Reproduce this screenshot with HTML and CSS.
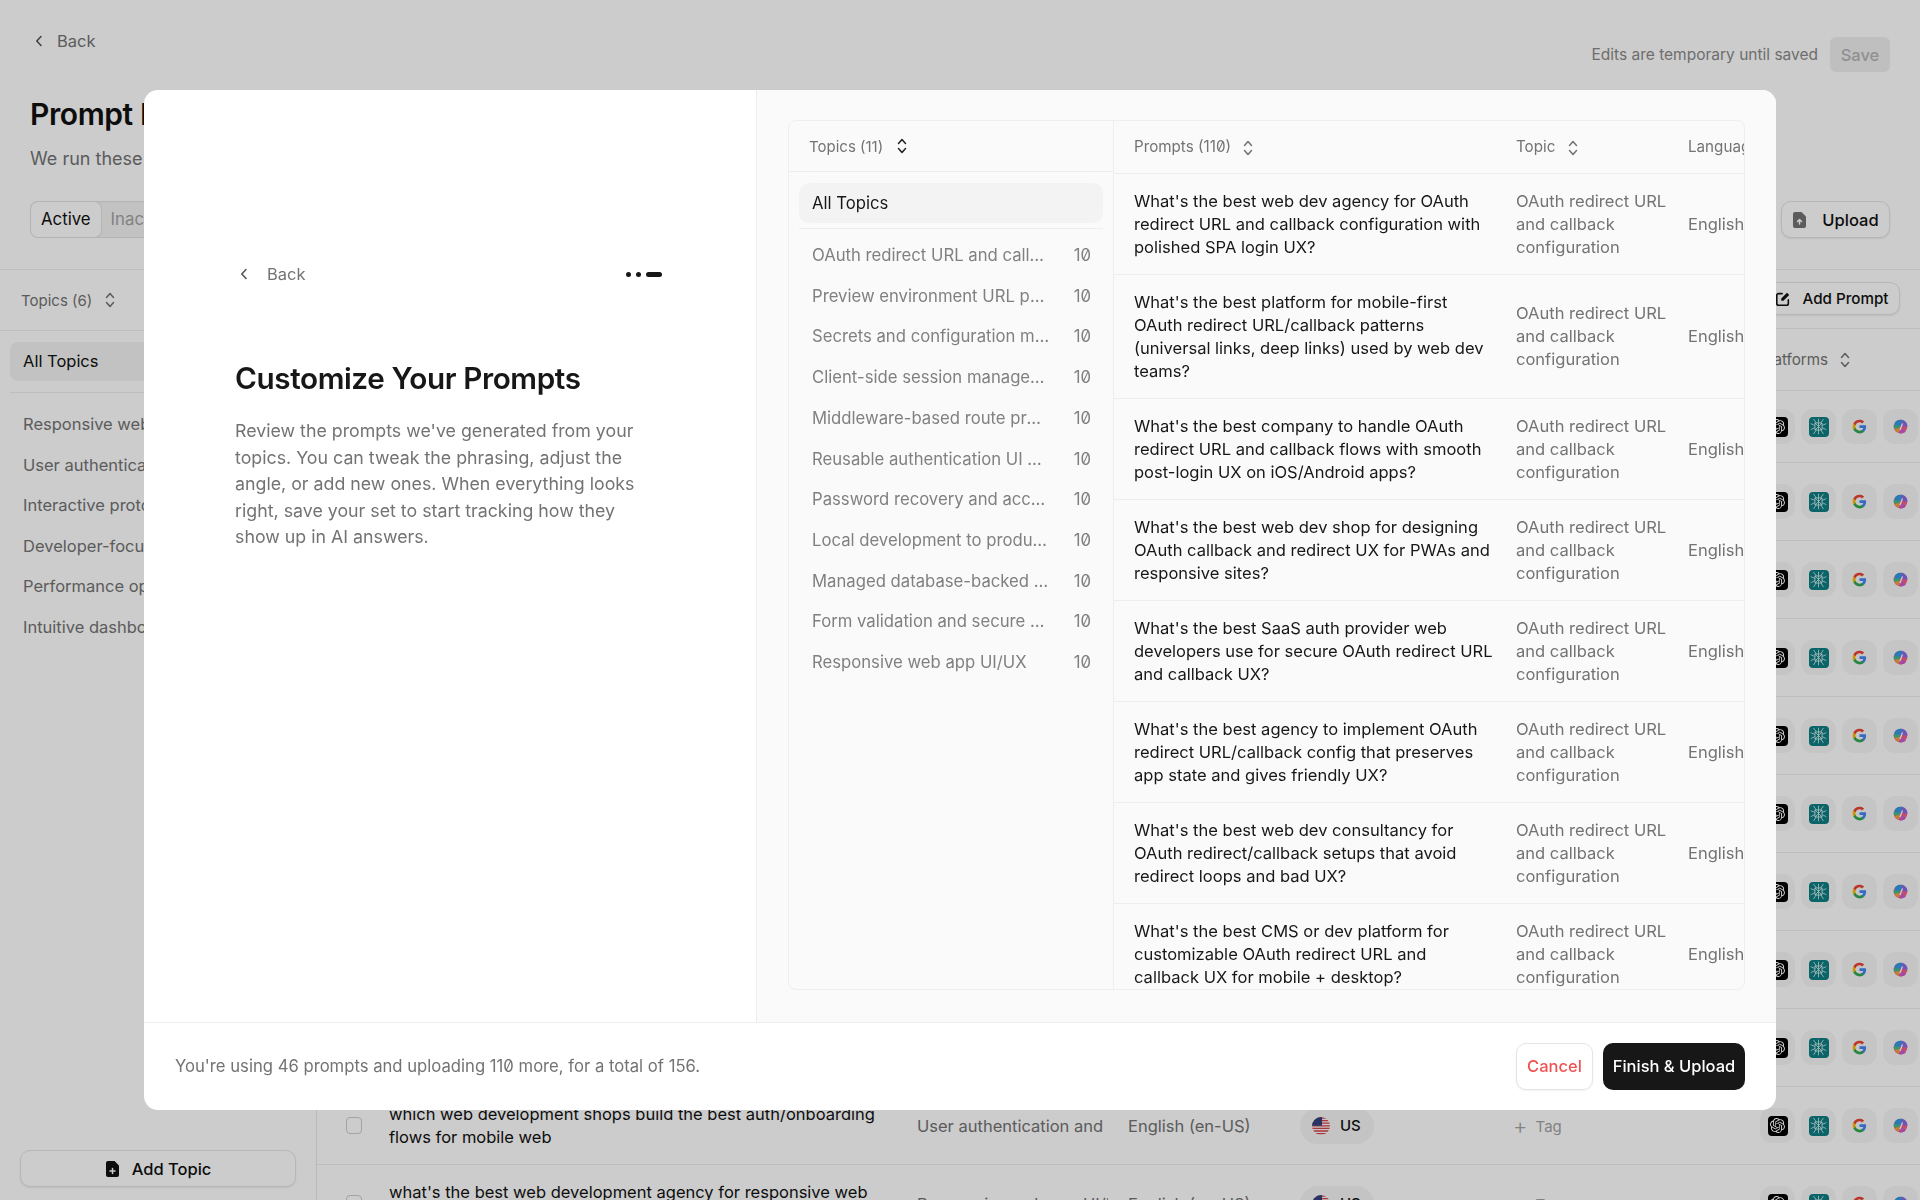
FILE: index.html
```html
<!DOCTYPE html>
<html lang="en">
<head>
    <meta charset="UTF-8">
    <meta name="viewport" content="width=device-width, initial-scale=1.0">
    <title>Prompt Library</title>
    <link rel="stylesheet" href="styles.css">
</head>
<body>
    <svg class="sprite" aria-hidden="true">
        <symbol id="sort" viewBox="0 0 10 18">
            <path d="M1.5 6.5 5 2.5l3.5 4M1.5 11.5 5 15.5l3.5-4" fill="none" stroke="currentColor" stroke-width="1.5" stroke-linecap="round" stroke-linejoin="round"/>
        </symbol>
        <symbol id="chevron" viewBox="0 0 10 14">
            <path d="M7 2.5 2.8 7 7 11.5" fill="none" stroke="currentColor" stroke-width="1.6" stroke-linecap="round" stroke-linejoin="round"/>
        </symbol>
        <symbol id="openai" viewBox="0 0 24 24">
            <path fill="#fff" d="M22.2819 9.8211a5.9847 5.9847 0 0 0-.5157-4.9108 6.0462 6.0462 0 0 0-6.5098-2.9A6.0651 6.0651 0 0 0 4.9807 4.1818a5.9847 5.9847 0 0 0-3.9977 2.9 6.0462 6.0462 0 0 0 .7427 7.0966 5.98 5.98 0 0 0 .511 4.9107 6.051 6.051 0 0 0 6.5146 2.9001A5.9847 5.9847 0 0 0 13.2599 24a6.0557 6.0557 0 0 0 5.7718-4.2058 5.9894 5.9894 0 0 0 3.9977-2.9001 6.0557 6.0557 0 0 0-.7475-7.0729zm-9.022 12.6081a4.4755 4.4755 0 0 1-2.8764-1.0408l.1419-.0804 4.7783-2.7582a.7948.7948 0 0 0 .3927-.6813v-6.7369l2.02 1.1686a.071.071 0 0 1 .038.052v5.5826a4.504 4.504 0 0 1-4.4945 4.4944zm-9.6607-4.1254a4.4708 4.4708 0 0 1-.5346-3.0137l.142.0852 4.783 2.7582a.7712.7712 0 0 0 .7806 0l5.8428-3.3685v2.3324a.0804.0804 0 0 1-.0332.0615L9.74 19.9502a4.4992 4.4992 0 0 1-6.1408-1.6464zM2.3408 7.8956a4.485 4.485 0 0 1 2.3655-1.9728V11.6a.7664.7664 0 0 0 .3879.6765l5.8144 3.3543-2.0201 1.1685a.0757.0757 0 0 1-.071 0l-4.8303-2.7865A4.504 4.504 0 0 1 2.3408 7.872zm16.5963 3.8558L13.1038 8.364 15.1192 7.2a.0757.0757 0 0 1 .071 0l4.8303 2.7913a4.4944 4.4944 0 0 1-.6765 8.1042v-5.6772a.79.79 0 0 0-.407-.667zm2.0107-3.0231l-.142-.0852-4.7735-2.7818a.7759.7759 0 0 0-.7854 0L9.409 9.2297V6.8974a.0662.0662 0 0 1 .0284-.0615l4.8303-2.7866a4.4992 4.4992 0 0 1 6.6802 4.66zM8.3065 12.863l-2.02-1.1638a.0804.0804 0 0 1-.038-.0567V6.0742a4.4992 4.4992 0 0 1 7.3757-3.4537l-.142.0805L8.704 5.459a.7948.7948 0 0 0-.3927.6813zm1.0976-2.3654l2.602-1.4998 2.6069 1.4998v2.9994l-2.5974 1.4997-2.6067-1.4997Z"/>
        </symbol>
        <symbol id="perplexity" viewBox="0 0 24 24">
            <path d="M12 1v22M5 1.500l4 5.500M19 1.500l-4 5.500M1 8l6 2.500M23 8l-6 2.500M1 16.500l6-3M23 16.500l-6-3M5 22.500l4-6M19 22.500l-4-6M7 7h10v10H7zM7 7l10 10M17 7 7 17" fill="none" stroke="#dff3f3" stroke-width="1.100" stroke-linejoin="round"/>
        </symbol>
        <symbol id="google" viewBox="0 0 24 24">
            <path fill="#4285f4" d="M22.56 12.25c0-.78-.07-1.53-.2-2.25H12v4.26h5.92c-.26 1.37-1.04 2.53-2.21 3.31v2.77h3.57c2.08-1.92 3.28-4.74 3.28-8.09z"/>
            <path fill="#34a853" d="M12 23c2.97 0 5.46-.98 7.28-2.66l-3.57-2.77c-.98.66-2.23 1.06-3.71 1.06-2.86 0-5.29-1.93-6.16-4.53H2.18v2.84C3.99 20.53 7.7 23 12 23z"/>
            <path fill="#fbbc05" d="M5.84 14.09c-.22-.66-.35-1.36-.35-2.09s.13-1.43.35-2.09V7.07H2.18C1.43 8.55 1 10.22 1 12s.43 3.45 1.18 4.93l2.85-2.22.81-.62z"/>
            <path fill="#ea4335" d="M12 5.38c1.62 0 3.06.56 4.21 1.64l3.15-3.15C17.45 2.09 14.97 1 12 1 7.7 1 3.99 3.47 2.18 7.07l3.66 2.84c.87-2.6 3.3-4.53 6.16-4.53z"/>
        </symbol>
        <symbol id="copilot" viewBox="0 0 24 24">
            <circle cx="12" cy="12" r="11" fill="#f0608c"/>
            <path fill="#2f9be6" d="M12 1A11 11 0 0 0 3 6L2.500 11H12l3-10z"/>
            <path fill="#8a6ce8" d="M15 1.500 12 11l11 1c.5-5-3.500-10-8-10.500z"/>
            <path fill="#3fbf88" d="M1 10.500c0 2 .5 4 1.500 5.500l7.500-1 1-4.500z"/>
            <path fill="#f7a13a" d="M2.500 15.500c1 3 4 6 7 7l2-8z"/>
            <path fill="#d05ccc" d="M9.500 22.500c3 1.200 9 .5 11-3l-9-5.500z"/>
            <path fill="#fff" d="M14 7h2.200l-4 11H10z"/>
        </symbol>
        <symbol id="flag-us" viewBox="0 0 18 18">
            <rect width="18" height="18" fill="#f6f6f6"/>
            <path d="M0 1h18M0 3.600h18M0 6.200h18M0 8.800h18M0 11.400h18M0 14h18M0 16.600h18" stroke="#d8434b" stroke-width="1.300"/>
            <rect width="10" height="8.800" fill="#34427f"/>
        </symbol>
    </svg>

    <div class="page">
        <header class="page-head">
            <div class="head-top">
                <a class="back-link" href="#"><svg class="icon-chevron"><use href="#chevron"/></svg>Back</a>
                <div class="save-group">
                    <span>Edits are temporary until saved</span>
                    <button class="save-btn">Save</button>
                </div>
            </div>
            <h1>Prompt Library</h1>
            <p class="page-sub">We run these prompts daily across the AI platforms you track.</p>
            <div class="head-controls">
                <div class="tabs">
                    <span class="tab active">Active</span>
                    <span class="tab">Inactive</span>
                </div>
                <button class="btn upload-btn">
                    <svg class="icon-md" viewBox="0 0 16 18"><path d="M3 1h6.500L14 5.500V15a2 2 0 0 1-2 2H3a2 2 0 0 1-2-2V3a2 2 0 0 1 2-2z" fill="#737373"/><path d="M7.500 13V9M5.500 10.500l2-2 2 2" fill="none" stroke="#fff" stroke-width="1.500" stroke-linecap="round" stroke-linejoin="round"/></svg>
                    Upload
                </button>
            </div>
        </header>

        <div class="page-body">
            <aside class="sidebar">
                <div class="sidebar-head">Topics (6) <svg class="icon-sort"><use href="#sort"/></svg></div>
                <div class="side-all">All Topics</div>
                <ul class="side-list">
                    <li>Responsive web app UI/UX</li>
                    <li>User authentication and</li>
                    <li>Interactive prototypes</li>
                    <li>Developer-focused</li>
                    <li>Performance optimization</li>
                    <li>Intuitive dashboards</li>
                </ul>
                <button class="btn add-topic">
                    <svg class="icon-md" viewBox="0 0 16 18"><path d="M3 1h6.500L14 5.500V15a2 2 0 0 1-2 2H3a2 2 0 0 1-2-2V3a2 2 0 0 1 2-2z" fill="#111"/><path d="M7.500 8.500v5M5 11h5" stroke="#fff" stroke-width="1.500" stroke-linecap="round"/></svg>
                    Add Topic
                </button>
            </aside>

            <main class="main">
                <div class="toolbar">
                    <button class="btn add-prompt">
                        <svg class="icon-md" viewBox="0 0 18 18"><path d="M8 3H4a2 2 0 0 0-2 2v9a2 2 0 0 0 2 2h9a2 2 0 0 0 2-2v-4" fill="none" stroke="#111" stroke-width="1.800" stroke-linecap="round"/><path d="M7 8.500 13.500 2 16 4.500 9.500 11H7z" fill="#111"/></svg>
                        Add Prompt
                    </button>
                </div>
                <div class="prompt-row head-row">
                    <span></span>
                    <span>Prompt</span>
                    <span>Topic</span>
                    <span>Language</span>
                    <span>Location</span>
                    <span>Tags</span>
                    <span class="head-platforms">Platforms <svg class="icon-sort"><use href="#sort"/></svg></span>
                </div>

                <div class="prompt-row first">
                    <span class="check"></span><span class="p-text"></span><span></span><span></span><span></span><span></span>
                    <div class="platforms"><span class="pf"><span class="tile black"><svg><use href="#openai"/></svg></span></span><span class="pf"><span class="tile teal"><svg><use href="#perplexity"/></svg></span></span><span class="pf"><svg class="bare"><use href="#google"/></svg></span><span class="pf"><svg class="bare"><use href="#copilot"/></svg></span></div>
                </div>
                <div class="prompt-row">
                    <span class="check"></span><span class="p-text"></span><span></span><span></span><span></span><span></span>
                    <div class="platforms"><span class="pf"><span class="tile black"><svg><use href="#openai"/></svg></span></span><span class="pf"><span class="tile teal"><svg><use href="#perplexity"/></svg></span></span><span class="pf"><svg class="bare"><use href="#google"/></svg></span><span class="pf"><svg class="bare"><use href="#copilot"/></svg></span></div>
                </div>
                <div class="prompt-row">
                    <span class="check"></span><span class="p-text"></span><span></span><span></span><span></span><span></span>
                    <div class="platforms"><span class="pf"><span class="tile black"><svg><use href="#openai"/></svg></span></span><span class="pf"><span class="tile teal"><svg><use href="#perplexity"/></svg></span></span><span class="pf"><svg class="bare"><use href="#google"/></svg></span><span class="pf"><svg class="bare"><use href="#copilot"/></svg></span></div>
                </div>
                <div class="prompt-row">
                    <span class="check"></span><span class="p-text"></span><span></span><span></span><span></span><span></span>
                    <div class="platforms"><span class="pf"><span class="tile black"><svg><use href="#openai"/></svg></span></span><span class="pf"><span class="tile teal"><svg><use href="#perplexity"/></svg></span></span><span class="pf"><svg class="bare"><use href="#google"/></svg></span><span class="pf"><svg class="bare"><use href="#copilot"/></svg></span></div>
                </div>
                <div class="prompt-row">
                    <span class="check"></span><span class="p-text"></span><span></span><span></span><span></span><span></span>
                    <div class="platforms"><span class="pf"><span class="tile black"><svg><use href="#openai"/></svg></span></span><span class="pf"><span class="tile teal"><svg><use href="#perplexity"/></svg></span></span><span class="pf"><svg class="bare"><use href="#google"/></svg></span><span class="pf"><svg class="bare"><use href="#copilot"/></svg></span></div>
                </div>
                <div class="prompt-row">
                    <span class="check"></span><span class="p-text"></span><span></span><span></span><span></span><span></span>
                    <div class="platforms"><span class="pf"><span class="tile black"><svg><use href="#openai"/></svg></span></span><span class="pf"><span class="tile teal"><svg><use href="#perplexity"/></svg></span></span><span class="pf"><svg class="bare"><use href="#google"/></svg></span><span class="pf"><svg class="bare"><use href="#copilot"/></svg></span></div>
                </div>
                <div class="prompt-row">
                    <span class="check"></span><span class="p-text"></span><span></span><span></span><span></span><span></span>
                    <div class="platforms"><span class="pf"><span class="tile black"><svg><use href="#openai"/></svg></span></span><span class="pf"><span class="tile teal"><svg><use href="#perplexity"/></svg></span></span><span class="pf"><svg class="bare"><use href="#google"/></svg></span><span class="pf"><svg class="bare"><use href="#copilot"/></svg></span></div>
                </div>
                <div class="prompt-row">
                    <span class="check"></span><span class="p-text"></span><span></span><span></span><span></span><span></span>
                    <div class="platforms"><span class="pf"><span class="tile black"><svg><use href="#openai"/></svg></span></span><span class="pf"><span class="tile teal"><svg><use href="#perplexity"/></svg></span></span><span class="pf"><svg class="bare"><use href="#google"/></svg></span><span class="pf"><svg class="bare"><use href="#copilot"/></svg></span></div>
                </div>
                <div class="prompt-row">
                    <span class="check"></span><span class="p-text"></span><span></span><span></span><span></span><span></span>
                    <div class="platforms"><span class="pf"><span class="tile black"><svg><use href="#openai"/></svg></span></span><span class="pf"><span class="tile teal"><svg><use href="#perplexity"/></svg></span></span><span class="pf"><svg class="bare"><use href="#google"/></svg></span><span class="pf"><svg class="bare"><use href="#copilot"/></svg></span></div>
                </div>
                <div class="prompt-row">
                    <span class="check"></span>
                    <span class="p-text">which web development shops build the best auth/onboarding flows for mobile web</span>
                    <span class="p-topic">User authentication and</span>
                    <span class="p-lang">English (en-US)</span>
                    <span class="loc"><svg class="flag"><use href="#flag-us"/></svg>US</span>
                    <span class="tag">+ <em>Tag</em></span>
                    <div class="platforms"><span class="pf"><span class="tile black"><svg><use href="#openai"/></svg></span></span><span class="pf"><span class="tile teal"><svg><use href="#perplexity"/></svg></span></span><span class="pf"><svg class="bare"><use href="#google"/></svg></span><span class="pf"><svg class="bare"><use href="#copilot"/></svg></span></div>
                </div>
                <div class="prompt-row">
                    <span class="check"></span>
                    <span class="p-text">what's the best web development agency for responsive web app design</span>
                    <span class="p-topic">Responsive web app UI/UX</span>
                    <span class="p-lang">English (en-US)</span>
                    <span class="loc"><svg class="flag"><use href="#flag-us"/></svg>US</span>
                    <span class="tag">+ <em>Tag</em></span>
                    <div class="platforms"><span class="pf"><span class="tile black"><svg><use href="#openai"/></svg></span></span><span class="pf"><span class="tile teal"><svg><use href="#perplexity"/></svg></span></span><span class="pf"><svg class="bare"><use href="#google"/></svg></span><span class="pf"><svg class="bare"><use href="#copilot"/></svg></span></div>
                </div>
            </main>
        </div>
    </div>

    <div class="overlay">
        <div class="modal">
            <div class="modal-main">
                <section class="intro">
                    <div class="intro-top">
                        <a class="back-link" href="#"><svg class="icon-chevron"><use href="#chevron"/></svg>Back</a>
                        <div class="steps"><i></i><i></i><i class="current"></i></div>
                    </div>
                    <h2>Customize Your Prompts</h2>
                    <p>Review the prompts we've generated from your topics. You can tweak the phrasing, adjust the angle, or add new ones. When everything looks right, save your set to start tracking how they show up in AI answers.</p>
                </section>

                <section class="review">
                    <div class="review-card">
                        <div class="topics-col">
                            <div class="topics-head">Topics (11) <svg class="icon-sort dark"><use href="#sort"/></svg></div>
                            <div class="topics-all-wrap"><div class="topics-all">All Topics</div></div>
                            <ul class="topics-list">
                                <li><span>OAuth redirect URL and callback configuration</span><b>10</b></li>
                                <li><span>Preview environment URL patterns</span><b>10</b></li>
                                <li><span>Secrets and configuration management</span><b>10</b></li>
                                <li><span>Client-side session management</span><b>10</b></li>
                                <li><span>Middleware-based route protection</span><b>10</b></li>
                                <li><span>Reusable authentication UI components</span><b>10</b></li>
                                <li><span>Password recovery and account flows</span><b>10</b></li>
                                <li><span>Local development to production parity</span><b>10</b></li>
                                <li><span>Managed database-backed authentication</span><b>10</b></li>
                                <li><span>Form validation and secure submission</span><b>10</b></li>
                                <li><span>Responsive web app UI/UX</span><b>10</b></li>
                            </ul>
                        </div>
                        <div class="prompts-col">
                            <table class="prompts-table">
                                <colgroup><col class="c-prompt"><col class="c-topic"><col class="c-lang"></colgroup>
                                <thead>
                                    <tr>
                                        <th>Prompts (110) <svg class="icon-sort"><use href="#sort"/></svg></th>
                                        <th>Topic <svg class="icon-sort"><use href="#sort"/></svg></th>
                                        <th>Language</th>
                                    </tr>
                                </thead>
                                <tbody>
                                    <tr>
                                        <td>What's the best web dev agency for OAuth redirect URL and callback configuration with polished SPA login UX?</td>
                                        <td>OAuth redirect URL and callback configuration</td>
                                        <td>English (en-US)</td>
                                    </tr>
                                    <tr>
                                        <td>What's the best platform for mobile-first OAuth redirect URL/callback patterns (universal links, deep links) used by web dev teams?</td>
                                        <td>OAuth redirect URL and callback configuration</td>
                                        <td>English (en-US)</td>
                                    </tr>
                                    <tr>
                                        <td>What's the best company to handle OAuth redirect URL and callback flows with smooth post-login UX on iOS/Android apps?</td>
                                        <td>OAuth redirect URL and callback configuration</td>
                                        <td>English (en-US)</td>
                                    </tr>
                                    <tr>
                                        <td>What's the best web dev shop for designing OAuth callback and redirect UX for PWAs and responsive sites?</td>
                                        <td>OAuth redirect URL and callback configuration</td>
                                        <td>English (en-US)</td>
                                    </tr>
                                    <tr>
                                        <td>What's the best SaaS auth provider web developers use for secure OAuth redirect URL and callback UX?</td>
                                        <td>OAuth redirect URL and callback configuration</td>
                                        <td>English (en-US)</td>
                                    </tr>
                                    <tr>
                                        <td>What's the best agency to implement OAuth redirect URL/callback config that preserves app state and gives friendly UX?</td>
                                        <td>OAuth redirect URL and callback configuration</td>
                                        <td>English (en-US)</td>
                                    </tr>
                                    <tr>
                                        <td>What's the best web dev consultancy for OAuth redirect/callback setups that avoid redirect loops and bad UX?</td>
                                        <td>OAuth redirect URL and callback configuration</td>
                                        <td>English (en-US)</td>
                                    </tr>
                                    <tr>
                                        <td>What's the best CMS or dev platform for customizable OAuth redirect URL and callback UX for mobile + desktop?</td>
                                        <td>OAuth redirect URL and callback configuration</td>
                                        <td>English (en-US)</td>
                                    </tr>
                                </tbody>
                            </table>
                        </div>
                    </div>
                </section>
            </div>
            <footer class="modal-foot">
                <span>You're using 46 prompts and uploading 110 more, for a total of 156.</span>
                <div class="foot-actions">
                    <button class="cancel-btn">Cancel</button>
                    <button class="finish-btn">Finish &amp; Upload</button>
                </div>
            </footer>
        </div>
    </div>
</body>
</html>
```

FILE: styles.css
```css
* {
    box-sizing: border-box;
}

html, body {
    height: 100%;
}

body {
    margin: 0;
    font-family: 'Inter', 'Liberation Sans', sans-serif;
    font-feature-settings: "zero";
    font-size: 16.5px;
    color: #111;
    background: #fff;
    overflow: hidden;
}

button {
    font-family: inherit;
    font-feature-settings: inherit;
    cursor: pointer;
}

ul {
    list-style: none;
    margin: 0;
    padding: 0;
}

.sprite {
    display: none;
}

/* page behind the dialog */
.page {
    height: 100vh;
    display: flex;
    flex-direction: column;
    overflow: hidden;
}

.page-head {
    height: 270px;
    padding: 24px 30px 0;
    border-bottom: 1px solid #eee;
    flex-shrink: 0;
}

.head-top {
    display: flex;
    justify-content: space-between;
    align-items: flex-start;
    height: 69px;
}

.back-link {
    display: inline-flex;
    align-items: center;
    gap: 13px;
    font-size: 16.5px;
    line-height: 34px;
    color: #737373;
    text-decoration: none;
}

.icon-chevron {
    width: 10px;
    height: 14px;
    margin-left: 4px;
    color: #555;
}

.save-group {
    display: flex;
    align-items: center;
    gap: 12px;
    margin-top: 13px;
    font-size: 15.5px;
    color: #8a8a8a;
}

.save-btn {
    width: 60px;
    height: 35px;
    border: none;
    border-radius: 6px;
    background: #efefef;
    color: #b5b5b5;
    font-size: 16.5px;
    font-weight: 500;
}

h1 {
    margin: 0;
    font-size: 30px;
    line-height: 42px;
    font-weight: 600;
    letter-spacing: -0.4px;
}

.page-sub {
    margin: 11px 0 0;
    font-size: 18px;
    line-height: 26px;
    color: #737373;
}

.head-controls {
    display: flex;
    justify-content: space-between;
    margin-top: 29px;
}

.tabs {
    display: flex;
    height: 37px;
    background: #f3f3f3;
    border: 1px solid #e2e2e2;
    border-radius: 8px;
}

.tab {
    padding: 0 10px;
    line-height: 35px;
    font-size: 16.8px;
    color: #a3a3a3;
}

.tab.active {
    background: #fff;
    color: #111;
    border-radius: 7px;
    box-shadow: 0 0 0 1px #e2e2e2;
}

.btn {
    display: inline-flex;
    align-items: center;
    justify-content: center;
    gap: 11px;
    background: #fff;
    color: #111;
    border: 1px solid #e5e5e5;
    border-radius: 10px;
    box-shadow: 0 1px 2px rgba(0, 0, 0, 0.08);
    font-size: 16.5px;
    font-weight: 500;
}

.icon-md {
    width: 16px;
    height: 18px;
}

.upload-btn {
    width: 109px;
    height: 37px;
    gap: 14px;
}

.page-body {
    flex: 1;
    display: flex;
    min-height: 0;
}

.sidebar {
    width: 317px;
    flex-shrink: 0;
    display: flex;
    flex-direction: column;
    border-right: 1px solid #e8e8e8;
    padding-bottom: 13px;
}

.sidebar-head {
    height: 61px;
    padding: 0 21px;
    display: flex;
    align-items: center;
    gap: 13px;
    font-size: 15px;
    color: #737373;
    border-bottom: 1px solid #eee;
    white-space: nowrap;
}

.icon-sort {
    width: 10px;
    height: 18px;
    color: #737373;
    vertical-align: middle;
    flex-shrink: 0;
}

.icon-sort.dark {
    color: #222;
}

.side-all {
    margin: 11px 10px 0;
    padding: 0 13px;
    height: 39px;
    line-height: 39px;
    border-radius: 8px;
    background: #f3f3f3;
}

.side-list {
    margin: 11px 10px 0;
    padding-top: 11px;
    border-top: 1px solid #eee;
}

.side-list li {
    padding: 0 13px;
    line-height: 40.6px;
    color: #737373;
    white-space: nowrap;
}

.add-topic {
    margin: auto 20px 0;
    height: 37px;
}

.main {
    flex: 1;
    min-width: 0;
}

.toolbar {
    height: 59px;
    padding: 12px 20px 0 0;
    display: flex;
    justify-content: flex-end;
    border-bottom: 1px solid #eee;
}

.add-prompt {
    width: 145px;
    height: 33px;
    padding-left: 15px;
    font-size: 15.2px;
}

.prompt-row {
    display: grid;
    grid-template-columns: 72px 528px 211px 174px 211px 247px auto;
    align-items: center;
    height: 78px;
    border-bottom: 1px solid #eee;
}

.prompt-row.first {
    height: 72px;
}

.head-row {
    height: 62px;
    font-size: 15.2px;
    color: #737373;
}

.head-platforms .icon-sort {
    margin-left: 8px;
}

.check {
    justify-self: center;
    width: 16px;
    height: 17px;
    margin-left: 1px;
    border: 1.5px solid #ccc;
    border-radius: 4px;
}

.p-text {
    width: 490px;
    line-height: 23px;
    color: #111;
}

.p-topic, .p-lang {
    color: #737373;
    white-space: nowrap;
    overflow: hidden;
}

.p-topic {
    width: 191px;
}

.loc {
    display: inline-flex;
    align-items: center;
    gap: 10px;
    width: 74px;
    height: 36px;
    padding-left: 12px;
    margin-left: -2px;
    border-radius: 18px;
    background: #f6f6f6;
    font-size: 15px;
    font-weight: 500;
}

.flag {
    width: 18px;
    height: 18px;
    border-radius: 50%;
}

.tag {
    color: #a3a3a3;
    font-size: 22px;
    font-weight: 300;
    line-height: 1;
}

.tag em {
    font-style: normal;
    font-size: 15px;
    font-weight: 400;
    vertical-align: 2px;
    margin-left: 2px;
}

.platforms {
    display: flex;
    gap: 6px;
}

.pf {
    width: 35px;
    height: 35px;
    flex-shrink: 0;
    display: flex;
    align-items: center;
    justify-content: center;
    border-radius: 12px;
    background: #f7f7f7;
}

.tile {
    width: 20px;
    height: 20px;
    border-radius: 4px;
    display: flex;
    align-items: center;
    justify-content: center;
}

.tile svg {
    width: 15px;
    height: 15px;
}

.tile.teal svg {
    width: 17px;
    height: 17px;
}

.tile.black {
    background: #000;
}

.tile.teal {
    background: #0e7d83;
}

.bare {
    width: 15px;
    height: 15px;
}

/* dialog */
.overlay {
    position: fixed;
    inset: 0;
    background: rgba(0, 0, 0, 0.2);
    display: flex;
    align-items: center;
    justify-content: center;
}

.modal {
    width: 1632px;
    height: 1020px;
    background: #fff;
    border-radius: 14px;
    display: flex;
    flex-direction: column;
    overflow: hidden;
}

.modal-main {
    flex: 1;
    min-height: 0;
    display: flex;
}

.intro {
    width: 613px;
    flex-shrink: 0;
    padding: 167px 94px 0 91px;
    border-right: 1px solid #eee;
}

.intro-top {
    display: flex;
    justify-content: space-between;
    align-items: center;
}

.intro .back-link {
    gap: 18px;
}

.steps {
    display: flex;
    align-items: center;
    gap: 5px;
}

.steps i {
    width: 5px;
    height: 5px;
    border-radius: 50%;
    background: #171717;
}

.steps i.current {
    width: 16px;
    height: 5px;
    border-radius: 3px;
}

.intro h2 {
    margin: 66px 0 0;
    font-size: 29.7px;
    line-height: 42px;
    font-weight: 600;
    letter-spacing: -0.4px;
    color: #171717;
}

.intro p {
    margin: 19px 0 0;
    max-width: 412px;
    font-size: 17.8px;
    line-height: 26.6px;
    color: #737373;
}

.review {
    flex: 1;
    min-width: 0;
    padding: 30px 31px 32px;
    background: #fafafa;
}

.review-card {
    height: 100%;
    display: flex;
    border: 1px solid #eee;
    border-radius: 8px;
    overflow: hidden;
}

.topics-col {
    width: 325px;
    flex-shrink: 0;
    border-right: 1px solid #eee;
}

.topics-head {
    height: 51px;
    padding: 0 20px;
    display: flex;
    align-items: center;
    gap: 14px;
    font-size: 15px;
    color: #737373;
    border-bottom: 1px solid #eee;
}

.topics-all-wrap {
    padding: 11px 10px 5px;
}

.topics-all {
    height: 40px;
    line-height: 40px;
    padding: 0 13px;
    border-radius: 10px;
    background: #f3f3f3;
    color: #171717;
    font-size: 16.7px;
}

.topics-list {
    margin: 0 10px;
    border-top: 1px solid #eee;
    padding-top: 6px;
}

.topics-list li {
    display: flex;
    justify-content: space-between;
    gap: 23px;
    padding: 0 12px 0 13px;
    line-height: 40.7px;
    font-size: 16.7px;
    color: #808080;
}

.topics-list span {
    overflow: hidden;
    text-overflow: ellipsis;
    white-space: nowrap;
}

.topics-list b {
    font-weight: 400;
    flex-shrink: 0;
}

.prompts-col {
    flex: 1;
    min-width: 0;
    overflow: hidden;
}

.prompts-table {
    table-layout: fixed;
    width: 820px;
    border-collapse: collapse;
}

.c-prompt {
    width: 382px;
}

.c-topic {
    width: 172px;
}

.c-lang {
    width: 266px;
}

.prompts-table th {
    height: 52px;
    padding: 0 20px;
    text-align: left;
    font-size: 15.2px;
    font-weight: 400;
    color: #737373;
    white-space: nowrap;
    border-bottom: 1px solid #eee;
}

.prompts-table th .icon-sort {
    margin-left: 8px;
}

.prompts-table td {
    padding: 16px 0 15px 20px;
    font-size: 16.55px;
    line-height: 23px;
    color: #737373;
    border-bottom: 1px solid #eee;
}

.prompts-table td:first-child {
    padding-right: 3px;
    color: #171717;
}

.prompts-table td:last-child {
    white-space: nowrap;
}

.modal-foot {
    height: 88px;
    flex-shrink: 0;
    padding: 0 31px;
    display: flex;
    justify-content: space-between;
    align-items: center;
    border-top: 1px solid #eee;
    font-size: 16.66px;
    color: #737373;
}

.foot-actions {
    display: flex;
    gap: 10px;
    margin-top: -1px;
}

.modal-foot > span {
    margin-top: -2px;
}

.cancel-btn, .finish-btn {
    height: 47px;
    border-radius: 10px;
    font-size: 16.5px;
    font-weight: 500;
}

.cancel-btn {
    width: 77px;
    background: #fff;
    border: 1px solid #e5e5e5;
    color: #f05252;
    box-shadow: 0 1px 2px rgba(0, 0, 0, 0.06);
}

.finish-btn {
    width: 142px;
    background: #171717;
    border: none;
    color: #fff;
}
```
